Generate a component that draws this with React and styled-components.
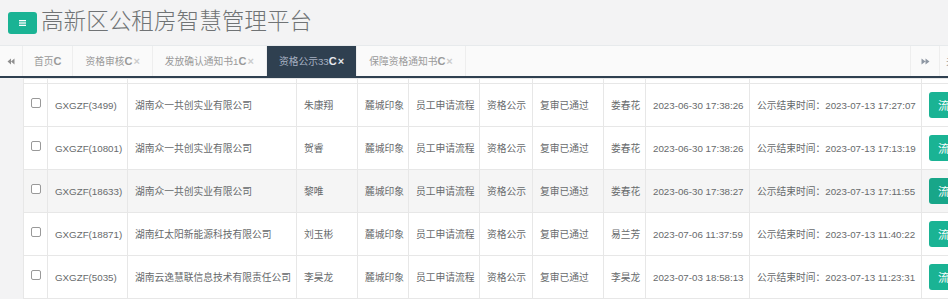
import React from 'react';
import styled, { createGlobalStyle } from 'styled-components';

const GlobalStyle = createGlobalStyle`
  html, body {
    margin: 0;
    padding: 0;
    overflow: hidden;
    background: #f3f3f4;
  }
  body {
    font-family: "Liberation Sans", "Noto Sans CJK SC", sans-serif;
  }
  *, *::before, *::after {
    box-sizing: border-box;
  }
`

const Page = styled.div`
  width: 100vw;
  height: 100vh;
  overflow: hidden;
  background: #f3f3f4;
`

// header
const Header = styled.header`
  height: 45px;
  display: flex;
  align-items: center;
  gap: 4px;
  padding-left: 8px;
`
const MenuButton = styled.button`
  width: 29px;
  height: 22px;
  padding: 0;
  border: 0;
  border-radius: 3px;
  background: #1ab394;
  display: flex;
  align-items: center;
  justify-content: center;
`
const Title = styled.h1`
  margin: 0 0 4px;
  font-family: "Noto Sans CJK SC", sans-serif;
  font-size: 22.6px;
  font-weight: 300;
  line-height: 1;
  color: #707375;
`

// tabs
const TabBar = styled.nav`
  width: 1020px;
  height: 33px;
  display: flex;
  background: #fafafa;
  border-top: 1px solid #e7eaec;
  border-bottom: 2px solid #2f4050;
`
const ArrowButton = styled.div`
  width: ${(p) => p.$w}px;
  flex-shrink: 0;
  display: flex;
  align-items: center;
  justify-content: center;
  border-right: 1px solid #eee;
  border-left: ${(p) => (p.$left ? '1px solid #eee' : '0')};
`
const TabArea = styled.div`
  flex: 1;
  min-width: 0;
  display: flex;
  overflow: hidden;
`
const Tab = styled.div`
  display: flex;
  align-items: center;
  padding: 0 ${(p) => (p.$home ? 11 : 12)}px;
  border-right: 1px solid #eee;
  font-size: 9.75px;
  white-space: nowrap;
  color: ${(p) => (p.$active ? '#a7b1c2' : '#999')};
  background: ${(p) => (p.$active ? '#2f4050' : 'transparent')};
`
const Refresh = styled.b`
  font-family: "Liberation Sans", sans-serif;
  font-size: 11px;
  font-weight: 700;
  color: ${(p) => (p.$active ? '#e6e9ee' : '#9a9a9a')};
`
const Close = styled.b`
  margin-left: 1px;
  font-size: 11px;
  font-weight: 700;
  color: ${(p) => (p.$active ? '#e6e9ee' : '#ccc')};
`
const CloseMenu = styled.div`
  width: 80px;
  flex-shrink: 0;
  display: flex;
  align-items: center;
  padding-left: 6px;
  font-size: 9.75px;
  color: #999;
`

// table
const TableWrap = styled.div`
  padding-left: 23px;
`
const Table = styled.table`
  border-collapse: collapse;
  table-layout: fixed;
  width: 998px;
  background: #fff;
  font-size: 9.75px;
  color: #676a6c;
`
const Col = styled.col`
  width: ${(p) => p.$w}px;
`
const Row = styled.tr`
  background: ${(p) => (p.$hover ? '#f5f5f5' : '#fff')};
`
const Cell = styled.td`
  height: ${(p) => (p.$clip ? 5 : 43)}px;
  padding: 0 0 0 ${(p) => (p.$center ? 0 : 7)}px;
  border: 1px solid #e7e7e7;
  white-space: nowrap;
  overflow: hidden;
  text-align: ${(p) => (p.$center ? 'center' : 'left')};
`
const Check = styled.input`
  appearance: none;
  width: 10px;
  height: 10px;
  margin: 0 0 4px;
  vertical-align: middle;
  border: 1px solid #999;
  border-radius: 2px;
  background: #fff;
`
const FlowButton = styled.button`
  height: 26px;
  padding: 0 9px;
  border: 0;
  border-radius: 3px;
  background: ${(p) => (p.$hover ? '#18a689' : '#1ab394')};
  color: #fff;
  font-family: "Noto Sans CJK SC", sans-serif;
  font-size: 11.5px;
  white-space: nowrap;
`

const BarsIcon = () => (
  <svg width="7" height="6" viewBox="0 0 7 6" fill="#fff">
    <rect x="0" y="0" width="7" height="1.3" />
    <rect x="0" y="2.35" width="7" height="1.3" />
    <rect x="0" y="4.7" width="7" height="1.3" />
  </svg>
)

const BackIcon = () => (
  <svg width="8" height="7" viewBox="0 0 14 14" fill="#8f8f8f">
    <path d="M7 1 L0 7 L7 13 Z M14 1 L7 7 L14 13 Z" />
  </svg>
)

const ForwardIcon = () => (
  <svg width="9" height="7" viewBox="0 0 16 14" fill="#8e97a3">
    <path d="M0 1 L8 7 L0 13 Z M8 1 L16 7 L8 13 Z" />
  </svg>
)

const tabs = [
  { label: '首页', home: true },
  { label: '资格审核' },
  { label: '发放确认通知书1' },
  { label: '资格公示33', active: true },
  { label: '保障资格通知书' },
]

const widths = [24, 80, 169, 61, 51, 71, 53, 71, 42, 104, 172, 100]

const rows = [
  ['GXGZF(3499)', '湖南众一共创实业有限公司', '朱康翔', '娄春花', '2023-06-30 17:38:26', '2023-07-13 17:27:07'],
  ['GXGZF(10801)', '湖南众一共创实业有限公司', '贺睿', '娄春花', '2023-06-30 17:38:26', '2023-07-13 17:13:19'],
  ['GXGZF(18633)', '湖南众一共创实业有限公司', '黎唯', '娄春花', '2023-06-30 17:38:27', '2023-07-13 17:11:55'],
  ['GXGZF(18871)', '湖南红太阳新能源科技有限公司', '刘玉彬', '易兰芳', '2023-07-06 11:37:59', '2023-07-13 11:40:22'],
  ['GXGZF(5035)', '湖南云逸慧联信息技术有限责任公司', '李昊龙', '李昊龙', '2023-07-03 18:58:13', '2023-07-13 11:23:31'],
]

const ClipRow = () => (
  <Row>
    {widths.map((_, i) => <Cell key={i} $clip />)}
  </Row>
)

const App = () => {
  return (
    <Page>
      <GlobalStyle />
      <Header>
        <MenuButton><BarsIcon /></MenuButton>
        <Title>高新区公租房智慧管理平台</Title>
      </Header>

      <TabBar>
        <ArrowButton $w={23}><BackIcon /></ArrowButton>
        <TabArea>
          {tabs.map((t) => (
            <Tab key={t.label} $active={t.active} $home={t.home}>
              {t.label}
              <Refresh $active={t.active}>C</Refresh>
              {!t.home && <Close $active={t.active}>×</Close>}
            </Tab>
          ))}
        </TabArea>
        <ArrowButton $w={30} $left><ForwardIcon /></ArrowButton>
        <CloseMenu>关闭操作</CloseMenu>
      </TabBar>

      <TableWrap>
        <Table>
          <colgroup>
            {widths.map((w, i) => <Col key={i} $w={w} />)}
          </colgroup>
          <tbody>
            <ClipRow />
            {rows.map((r, i) => (
              <Row key={r[0]} $hover={i === 2}>
                <Cell $center><Check type="checkbox" /></Cell>
                <Cell>{r[0]}</Cell>
                <Cell>{r[1]}</Cell>
                <Cell>{r[2]}</Cell>
                <Cell>麓城印象</Cell>
                <Cell>员工申请流程</Cell>
                <Cell>资格公示</Cell>
                <Cell>复审已通过</Cell>
                <Cell>{r[3]}</Cell>
                <Cell>{r[4]}</Cell>
                <Cell>公示结束时间：{r[5]}</Cell>
                <Cell><FlowButton $hover={i === 2}>流程记录</FlowButton></Cell>
              </Row>
            ))}
            <ClipRow />
          </tbody>
        </Table>
      </TableWrap>
    </Page>
  );
};

export default App;
